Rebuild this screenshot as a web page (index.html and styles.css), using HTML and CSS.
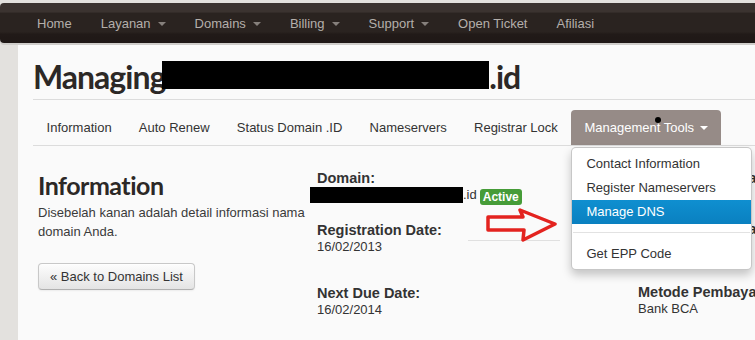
FILE: index.html
```html
<!DOCTYPE html>
<html lang="id">
<head>
<meta charset="utf-8">
<title>Managing domain</title>
<link rel="stylesheet" href="styles.css">
</head>
<body>
<nav class="navbar">
  <ul class="nav">
    <li>Home</li>
    <li>Layanan<span class="caret"></span></li>
    <li>Domains<span class="caret"></span></li>
    <li>Billing<span class="caret"></span></li>
    <li>Support<span class="caret"></span></li>
    <li>Open Ticket</li>
    <li>Afiliasi</li>
  </ul>
</nav>
<div class="page">
  <h1 class="title">Managing<span class="redact redact-title"></span>.id</h1>
  <div class="tabs">
    <div class="tab">Information</div>
    <div class="tab">Auto Renew</div>
    <div class="tab">Status Domain .ID</div>
    <div class="tab">Nameservers</div>
    <div class="tab">Registrar Lock</div>
    <div class="tab tab-active">Management Tools<span class="caret caret-white"></span>
      <span class="cursor-dot"></span>
      <ul class="dropdown">
        <li class="dd-item">Contact Information</li>
        <li class="dd-item">Register Nameservers</li>
        <li class="dd-item dd-active">Manage DNS</li>
        <li class="dd-divider"></li>
        <li class="dd-item">Get EPP Code</li>
      </ul>
    </div>
  </div>
  <div class="details">
    <div class="intro">
      <h2 class="intro-title">Information</h2>
      <p class="intro-text">Disebelah kanan adalah detail informasi nama domain Anda.</p>
      <div class="btn">« Back to Domains List</div>
    </div>
    <div class="col">
      <div class="field">
        <div class="field-label">Domain:</div>
        <div class="field-value"><span class="redact redact-domain"></span>.id<span class="badge">Active</span></div>
      </div>
      <div class="field field-wide">
        <div class="field-label">Registration Date:</div>
        <div class="field-value">16/02/2013</div>
      </div>
      <div class="field">
        <div class="field-label">Next Due Date:</div>
        <div class="field-value">16/02/2014</div>
      </div>
    </div>
    <div class="col col-right">
      <div class="field">
        <div class="field-label">Jumlah Pembayaran Pertama:</div>
        <div class="field-value">Rp. 0</div>
      </div>
      <div class="field field-wide">
        <div class="field-label">Jumlah Pembayaran Berulang:</div>
        <div class="field-value">Rp. 0</div>
      </div>
      <div class="field">
        <div class="field-label">Metode Pembayaran:</div>
        <div class="field-value">Bank BCA</div>
      </div>
    </div>
    <svg class="annotation" width="96" height="42" viewBox="0 0 96 42">
      <line x1="2" y1="36.5" x2="94" y2="36.5" stroke="#e0e0e0" stroke-width="1"/>
      <polygon points="22,13 57,13 54,6 89,20 57,36 58,26 22,26" fill="none" stroke="#e3231f" stroke-width="3.5" stroke-linejoin="round"/>
    </svg>
  </div>
</div>
</body>
</html>
```
FILE: styles.css
```css
body {
  margin: 0;
  background: #e3e1de;
  font-family: "Liberation Sans", Arial, sans-serif;
  color: #333;
  overflow: hidden;
}

.navbar {
  position: relative;
  z-index: 2;
  margin-top: 3px;
  height: 40px;
  background: linear-gradient(#3b3330 0, #3b3330 22%, #2a2320 26%, #2a2320 72%, #211a18 78%, #1f1816 100%);
  border-radius: 4px 0 0 4px;
  box-shadow: 0 2px 0 #cfcdca;
}

.nav {
  list-style: none;
  margin: 0;
  padding: 0 0 0 37px;
  height: 40px;
  display: flex;
  align-items: center;
  gap: 29px;
}

.nav li {
  font-size: 13px;
  color: #b4afab;
  display: flex;
  align-items: center;
  white-space: nowrap;
}

.caret {
  display: inline-block;
  width: 0;
  height: 0;
  border-left: 4px solid transparent;
  border-right: 4px solid transparent;
  border-top: 4px solid #86807c;
  margin-left: 7px;
  margin-top: 1px;
}

.caret-white {
  border-top-color: #fff;
  vertical-align: middle;
  margin-left: 6px;
  margin-top: -2px;
}

.page {
  margin-left: 18px;
  background: #fafafa;
  padding: 16px 0 0 15px;
  min-height: 300px;
}

.title {
  margin: 0;
  font-family: Lato, "Open Sans", sans-serif;
  font-weight: 700;
  font-size: 32px;
  line-height: 36px;
  letter-spacing: -1px;
  color: #2c2826;
  padding-bottom: 4px;
  border-bottom: 1px solid #dcdcdc;
  white-space: nowrap;
}

.redact {
  display: inline-block;
  background: #000;
}

.redact-title {
  width: 327px;
  height: 28px;
  margin-left: -3px;
  vertical-align: baseline;
}

.tabs {
  margin-top: 10px;
  height: 35px;
  display: flex;
  border-bottom: 1px solid #dcdcdc;
}

.tab {
  font-size: 13px;
  line-height: 35px;
  padding: 0 13.6px;
  color: #333;
  white-space: nowrap;
}

.tab-active {
  position: relative;
  background: #968b87;
  color: #fff;
  border-radius: 4px 4px 0 0;
  padding: 0 13px 0 13px;
}

.cursor-dot {
  position: absolute;
  left: 84px;
  top: 7px;
  width: 6px;
  height: 6px;
  border-radius: 50%;
  background: #000;
}

.dropdown {
  position: absolute;
  top: 37px;
  left: 0;
  width: 179px;
  margin: 0;
  padding: 4px 0 3px;
  list-style: none;
  background: #fff;
  border: 1px solid rgba(0, 0, 0, 0.22);
  border-radius: 5px;
  box-shadow: 0 5px 10px rgba(0, 0, 0, 0.22);
  z-index: 5;
  color: #333;
  line-height: 24px;
}

.dd-item {
  padding: 0 14px;
  font-size: 13px;
}

.dd-active {
  background: linear-gradient(#0f8fd0, #0a80c0);
  color: #fff;
}

.dd-divider {
  height: 1px;
  margin: 8px 1px;
  background: #e2e2e2;
  border-bottom: 1px solid #fff;
}

.details {
  position: relative;
  display: grid;
  grid-template-columns: 279px 321px auto;
  padding-left: 5px;
  margin-top: 24px;
}

.intro {
  padding-right: 5px;
}

.intro-title {
  margin: 0;
  font-family: Lato, "Open Sans", sans-serif;
  font-weight: 700;
  font-size: 25px;
  line-height: 30px;
  letter-spacing: -0.5px;
  color: #2c2826;
}

.intro-text {
  margin: 3px 0 0;
  font-size: 13px;
  line-height: 19px;
  color: #3a3a3a;
}

.btn {
  display: inline-block;
  margin-top: 22px;
  padding: 0 11px;
  height: 25px;
  line-height: 25px;
  font-size: 13px;
  color: #333;
  background: linear-gradient(#fdfdfd, #e4e4e4);
  border: 1px solid #c8c8c8;
  border-bottom-color: #b0b0b0;
  border-radius: 4px;
  box-shadow: inset 0 1px 0 rgba(255, 255, 255, 0.6), 0 1px 2px rgba(0, 0, 0, 0.06);
}

.field {
  margin-bottom: 17px;
  white-space: nowrap;
}

.field-wide {
  margin-bottom: 29px;
}

.field-label {
  font-weight: 700;
  font-size: 14.5px;
  line-height: 16px;
  color: #333;
}

.field-value {
  font-size: 13px;
  line-height: 18px;
  color: #333;
}

.redact-domain {
  width: 153px;
  height: 16px;
  margin-left: -7px;
  vertical-align: -4px;
}

.badge {
  display: inline-block;
  margin-left: 3px;
  padding: 1px 3px;
  line-height: 14px;
  font-size: 12px;
  font-weight: 700;
  color: #fff;
  background: #469c38;
  border-radius: 3px;
  vertical-align: -2px;
}

.annotation {
  position: absolute;
  left: 433px;
  top: 34px;
}
```
